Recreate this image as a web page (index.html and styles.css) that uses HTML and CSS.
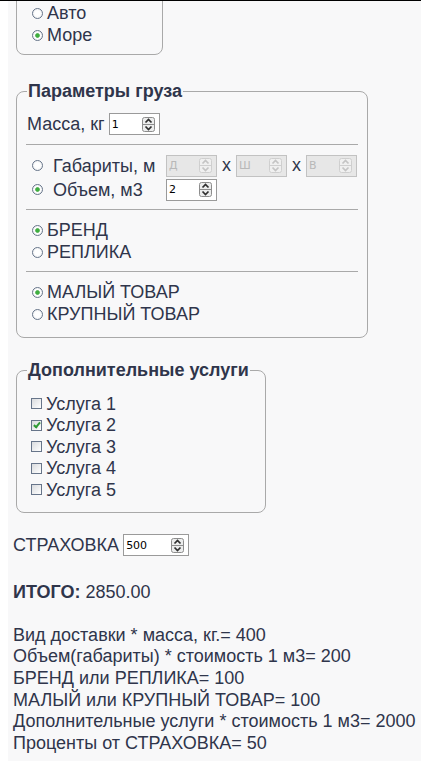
FILE: index.html
```html
<!DOCTYPE html>
<html lang="ru">
<head>
  <meta charset="UTF-8" />
  <title>Калькулятор доставки</title>
  <meta name="viewport" content="width=device-width, initial-scale=1.0" />
  <link rel="stylesheet" href="styles.css">
</head>
<body>
<div class="page">

  <fieldset class="box box-type">
    <label class="opt"><input type="radio" name="type">Авто</label>
    <label class="opt"><input type="radio" name="type" checked>Море</label>
  </fieldset>

  <fieldset class="box box-cargo">
    <legend>Параметры груза</legend>
    <div class="row first">
      <span class="lbl">Масса, кг</span>
      <span class="spin"><input type="text" value="1"><svg class="arrows" width="13" height="15" viewBox="0 0 13 15"><rect x="0.5" y="0.5" width="12" height="14" rx="2"/><line x1="1" y1="7.5" x2="12" y2="7.5"/><path d="M3.5 5.5 6.5 2.5 9.5 5.5"/><path d="M3.5 9.5 6.5 12.5 9.5 9.5"/></svg></span>
    </div>

    <div class="sep"></div>

    <div class="dims">
      <label class="opt wide"><input type="radio" name="size">Габариты, м</label>
      <div class="sizes">
        <span class="spin off"><input type="text" placeholder="Д" disabled><svg class="arrows" width="13" height="15" viewBox="0 0 13 15"><rect x="0.5" y="0.5" width="12" height="14" rx="2"/><line x1="1" y1="7.5" x2="12" y2="7.5"/><path d="M3.5 5.5 6.5 2.5 9.5 5.5"/><path d="M3.5 9.5 6.5 12.5 9.5 9.5"/></svg></span>
        <span class="x">х</span>
        <span class="spin off"><input type="text" placeholder="Ш" disabled><svg class="arrows" width="13" height="15" viewBox="0 0 13 15"><rect x="0.5" y="0.5" width="12" height="14" rx="2"/><line x1="1" y1="7.5" x2="12" y2="7.5"/><path d="M3.5 5.5 6.5 2.5 9.5 5.5"/><path d="M3.5 9.5 6.5 12.5 9.5 9.5"/></svg></span>
        <span class="x">х</span>
        <span class="spin off"><input type="text" placeholder="В" disabled><svg class="arrows" width="13" height="15" viewBox="0 0 13 15"><rect x="0.5" y="0.5" width="12" height="14" rx="2"/><line x1="1" y1="7.5" x2="12" y2="7.5"/><path d="M3.5 5.5 6.5 2.5 9.5 5.5"/><path d="M3.5 9.5 6.5 12.5 9.5 9.5"/></svg></span>
      </div>
      <label class="opt wide"><input type="radio" name="size" checked>Объем, м3</label>
      <div class="sizes">
        <span class="spin"><input type="text" value="2"><svg class="arrows" width="13" height="15" viewBox="0 0 13 15"><rect x="0.5" y="0.5" width="12" height="14" rx="2"/><line x1="1" y1="7.5" x2="12" y2="7.5"/><path d="M3.5 5.5 6.5 2.5 9.5 5.5"/><path d="M3.5 9.5 6.5 12.5 9.5 9.5"/></svg></span>
      </div>
    </div>

    <div class="sep"></div>

    <label class="opt"><input type="radio" name="brand" checked>БРЕНД</label>
    <label class="opt"><input type="radio" name="brand">РЕПЛИКА</label>

    <div class="sep"></div>

    <label class="opt"><input type="radio" name="goods" checked>МАЛЫЙ ТОВАР</label>
    <label class="opt"><input type="radio" name="goods">КРУПНЫЙ ТОВАР</label>
  </fieldset>

  <fieldset class="box box-extra">
    <legend>Дополнительные услуги</legend>
    <div class="list">
      <label class="opt"><input type="checkbox">Услуга 1</label>
      <label class="opt"><input type="checkbox" checked>Услуга 2</label>
      <label class="opt"><input type="checkbox">Услуга 3</label>
      <label class="opt"><input type="checkbox">Услуга 4</label>
      <label class="opt"><input type="checkbox">Услуга 5</label>
    </div>
  </fieldset>

  <div class="row insurance">
    <span class="lbl">СТРАХОВКА</span>
    <span class="spin wide-spin"><input type="text" value="500"><svg class="arrows" width="13" height="15" viewBox="0 0 13 15"><rect x="0.5" y="0.5" width="12" height="14" rx="2"/><line x1="1" y1="7.5" x2="12" y2="7.5"/><path d="M3.5 5.5 6.5 2.5 9.5 5.5"/><path d="M3.5 9.5 6.5 12.5 9.5 9.5"/></svg></span>
  </div>

  <div class="total"><b>ИТОГО:</b> 2850.00</div>

  <div class="details">
    <div>Вид доставки * масса, кг.= 400</div>
    <div>Объем(габариты) * стоимость 1 м3= 200</div>
    <div>БРЕНД или РЕПЛИКА= 100</div>
    <div>МАЛЫЙ или КРУПНЫЙ ТОВАР= 100</div>
    <div>Дополнительные услуги * стоимость 1 м3= 2000</div>
    <div>Проценты от СТРАХОВКА= 50</div>
  </div>

</div>
</body>
</html>
```

FILE: styles.css
```css
body {
  margin: 0;
  background: #fff;
  border-top: 1px solid #000;
  font-family: "Liberation Sans", Arial, sans-serif;
  font-size: 18px;
  color: #2f354b;
}
.page {
  margin-left: 8px;
  padding: 0 0 6px 5px;
  background: #f8f8f9;
  overflow: hidden;
}
fieldset {
  box-sizing: border-box;
  margin: 0 0 0 3px;
  padding: 0 10px;
  border: 1px solid #a9a9a9;
  border-radius: 8px;
}
legend {
  padding: 0 1px;
  font-weight: bold;
  line-height: 21px;
}
.box-type {
  width: 147px;
  margin-top: -11px;
  padding-top: 11px;
  padding-bottom: 8px;
}
.box-cargo {
  width: 351px;
  margin-top: 26px;
  padding-bottom: 12px;
}
.box-extra {
  width: 250px;
  margin-top: 22px;
  padding-bottom: 11px;
}
.opt {
  display: flex;
  align-items: center;
  height: 22px;
  line-height: 22px;
}
.list {
  margin-top: 12px;
}
.list .opt {
  height: 21.5px;
}

input[type="radio"],
input[type="checkbox"] {
  appearance: none;
  -webkit-appearance: none;
  box-sizing: border-box;
  width: 11px;
  height: 11px;
  margin: 0 4px 0 5px;
  border: 1px solid #67758a;
  background: linear-gradient(135deg, #d9dbde, #fff);
  flex: none;
  position: relative;
}
input[type="radio"] {
  border-radius: 50%;
  background: radial-gradient(circle, #fff 40%, #e4e6e9);
}
input[type="radio"]:checked {
  background: radial-gradient(circle, #3fae3f 0 1.8px, #9fd29f 2.3px, #fff 2.8px, #e4e6e9);
}
input[type="checkbox"] {
  margin: 0 4px 0 4px;
}
input[type="checkbox"]:checked::after {
  content: "";
  position: absolute;
  left: 3px;
  top: 0px;
  width: 2px;
  height: 5px;
  border-right: 2px solid #2f9a35;
  border-bottom: 2px solid #2f9a35;
  transform: rotate(40deg);
}
.wide input[type="radio"] {
  margin-right: 10px;
}

.row {
  display: flex;
  align-items: center;
  height: 24px;
}
.row.first {
  margin-top: 10px;
}
.lbl {
  margin-right: 4px;
}
.sep {
  border-top: 1px solid #a9a9a9;
  margin: 8px -1px 9px;
}
.dims {
  display: grid;
  grid-template-columns: 139px auto;
  grid-auto-rows: 23px;
  row-gap: 1px;
  align-items: center;
}
.sizes {
  display: flex;
  align-items: center;
}
.x {
  width: 19px;
  text-align: center;
}

.spin {
  box-sizing: border-box;
  display: inline-flex;
  align-items: center;
  width: 51px;
  height: 22px;
  border: 1px solid #9a9a9a;
  background: #fff;
}
.spin input {
  width: 28px;
  border: 0;
  padding: 0 0 0 2px;
  margin: 0;
  background: transparent;
  font-family: "DejaVu Sans", sans-serif;
  font-size: 11px;
  color: #000;
  outline: none;
}
.spin input::placeholder {
  color: #b8b8b8;
}
.spin .arrows {
  margin-left: auto;
  margin-right: 4px;
}
.arrows rect {
  fill: #eceded;
  stroke: #8d8d8d;
}
.arrows line {
  stroke: #8d8d8d;
}
.arrows path {
  fill: none;
  stroke: #2e2e2e;
  stroke-width: 1.7;
}
.spin.off {
  background: #e7e7e7;
  border-color: #c2c2c2;
}
.spin.off .arrows rect {
  fill: #f0f0f0;
  stroke: #cfcfcf;
}
.spin.off .arrows line {
  stroke: #cfcfcf;
}
.spin.off .arrows path {
  stroke: #c4c4c4;
}
.wide-spin {
  width: 66px;
}
.wide-spin input {
  width: 40px;
}

.insurance {
  margin-top: 21px;
  height: 23px;
}
.total {
  margin-top: 24px;
  line-height: 22px;
}
.details {
  margin-top: 22px;
  line-height: 21.7px;
}
```
